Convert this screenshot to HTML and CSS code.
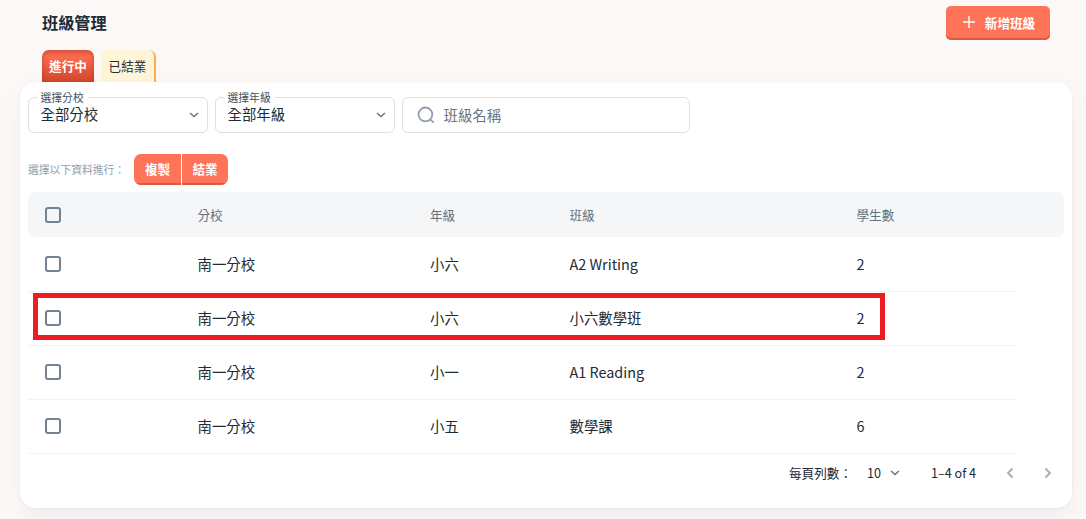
FILE: index.html
```html
<!DOCTYPE html>
<html lang="zh-Hant">
<head>
  <meta charset="UTF-8">
  <title>班級管理</title>
  <link rel="stylesheet" href="styles.css">
</head>
<body>
  <header class="page-header">
    <h1>班級管理</h1>
    <button class="btn add-btn">
      <svg width="12" height="12" viewBox="0 0 12 12"><path d="M6 0v12M0 6h12" /></svg>
      <span>新增班級</span>
    </button>
  </header>

  <nav class="tabs">
    <button class="tab active">進行中</button>
    <button class="tab">已結業</button>
  </nav>

  <main class="card">
    <div class="filters">
      <div class="select">
        <span class="select-label">選擇分校</span>
        <span>全部分校</span>
        <svg class="chevron" width="10" height="6" viewBox="0 0 10 6"><path d="M1 1l4 3.6L9 1" /></svg>
      </div>
      <div class="select">
        <span class="select-label">選擇年級</span>
        <span>全部年級</span>
        <svg class="chevron" width="10" height="6" viewBox="0 0 10 6"><path d="M1 1l4 3.6L9 1" /></svg>
      </div>
      <div class="search">
        <svg width="18" height="18" viewBox="0 0 18 18"><circle cx="8.4" cy="8.4" r="6.9" /><path d="M13.4 13.6l3.4 3" /></svg>
        <input type="text" placeholder="班級名稱">
      </div>
    </div>

    <div class="actions">
      <span class="hint">選擇以下資料進行：</span>
      <div class="btn-group">
        <button class="btn">複製</button>
        <button class="btn">結業</button>
      </div>
    </div>

    <div class="table">
      <div class="row head"><i class="check"></i><span>分校</span><span>年級</span><span>班級</span><span>學生數</span></div>
      <div class="row"><i class="check"></i><span>南一分校</span><span>小六</span><span>A2 Writing</span><span>2</span></div>
      <div class="row marked"><i class="check"></i><span>南一分校</span><span>小六</span><span>小六數學班</span><span>2</span></div>
      <div class="row"><i class="check"></i><span>南一分校</span><span>小一</span><span>A1 Reading</span><span>2</span></div>
      <div class="row"><i class="check"></i><span>南一分校</span><span>小五</span><span>數學課</span><span>6</span></div>
    </div>

    <footer class="pagination">
      <span>每頁列數：</span>
      <span class="page-size">10</span>
      <svg class="chevron" width="10" height="6" viewBox="0 0 10 6"><path d="M1 1l4 3.6L9 1" /></svg>
      <span class="range">1–4 of 4</span>
      <svg class="arrow prev" width="8" height="12" viewBox="0 0 8 12"><path d="M6.5 1.5L2 6l4.5 4.5" /></svg>
      <svg class="arrow" width="8" height="12" viewBox="0 0 8 12"><path d="M1.5 1.5L6 6l-4.5 4.5" /></svg>
    </footer>
  </main>
</body>
</html>
```
FILE: styles.css
```css
*, *::after { box-sizing: border-box; }
body { margin: 0; height: 519px; overflow: hidden; background: #fcf8f7; color: #212b36; font-family: "Noto Sans CJK TC", sans-serif; font-size: 14.4px; line-height: 20px; }
button, input { font-family: inherit; border: 0; padding: 0; }
svg { display: block; fill: none; stroke: currentColor; flex: none; }

.page-header { display: flex; justify-content: space-between; align-items: flex-start; height: 50px; padding: 6px 36px 0 42px; }
h1 { margin: 4px 0 0; font-size: 16.2px; line-height: 24px; font-weight: 700; }
.btn { padding-bottom: 2px; background: #ff7358; color: #fff; font-size: 12.6px; font-weight: 700; box-shadow: inset 0 -2px 0 #db5843; }
.add-btn { display: flex; align-items: center; justify-content: center; gap: 10px; width: 104px; height: 34px; padding-left: 2px; border-radius: 5px; }
.add-btn svg { stroke-width: 1.4; }

.tabs { display: flex; gap: 7px; height: 32px; padding-left: 42px; }
.tab { width: 52px; padding-bottom: 2px; border-radius: 7px 7px 0 0; background: #fff5d6; color: #212b36; font-size: 12.6px; font-weight: 400; }
.tab:last-child { width: 55px; border-right: 2px solid #ffac4f; }
.tab.active { background: linear-gradient(#f96a4f 25%, #d0452b); color: #fff; font-weight: 700; box-shadow: inset 0 2px 4px rgba(150, 40, 20, .45); }

.card { width: 1052px; height: 426px; margin-left: 20px; padding: 15px 8px 0; background: #fff; border-radius: 15px; box-shadow: 0 0 2px rgba(145, 158, 171, .2), 0 11px 22px -4px rgba(145, 158, 171, .14); }
.filters { display: flex; gap: 7px; height: 36px; }
.select, .search { position: relative; display: flex; align-items: center; border: 1px solid #dce0e4; border-radius: 6px; }
.select { width: 180px; padding: 0 8px 2px 11.5px; justify-content: space-between; }
.select-label { position: absolute; left: 7.5px; top: -10px; padding: 0 4px; background: #fff; color: #454f5b; font-size: 10.8px; line-height: 18px; }
.select .chevron { margin-top: 1px; }
.chevron { color: #637381; stroke-width: 1.4; }
.search { width: 288px; padding-left: 14px; gap: 8.5px; }
.search svg { color: #919eab; stroke-width: 1.8; }
.search input { width: 230px; padding-bottom: 2px; font-size: 14.4px; outline: none; background: none; }
.search input::placeholder { color: #6b7780; opacity: 1; }

.actions { display: flex; align-items: center; height: 31px; margin: 21px 0 7px; }
.hint { width: 106px; padding-bottom: 1px; color: #919eab; font-size: 10.8px; }
.btn-group { display: flex; height: 31px; gap: 1px; border-radius: 7px; overflow: hidden; }
.btn-group .btn { width: 47px; }
.btn-group .btn:last-child { width: 46px; }

.row { position: relative; display: grid; grid-template-columns: 152.5px 232.5px 139.5px 287px 1fr; align-items: center; width: 990px; height: 54px; padding: 0 0 1px 17px; border-bottom: 1px solid #f1f3f4; }
.row.head { width: 1036px; height: 45px; padding-bottom: 0; border: 0; border-radius: 7px; background: #f4f6f8; color: #637381; font-size: 12.6px; }
.row:nth-child(2) { height: 55px; }
.check { width: 16px; height: 16px; border: 2px solid #738190; border-radius: 3px; }
/* red frame around the highlighted class */
.marked::after { content: ""; position: absolute; left: 5px; top: 1px; width: 852px; height: 47px; border: 5px solid #ed1c24; }

.pagination { display: flex; align-items: center; height: 38px; padding-left: 761px; font-size: 12.6px; }
.page-size { margin: 0 9px 0 15px; }
.range { margin: 0 30px 0 31px; }
.arrow { color: #a5afba; stroke-width: 1.9; }
.prev { margin-right: 30px; }
```
